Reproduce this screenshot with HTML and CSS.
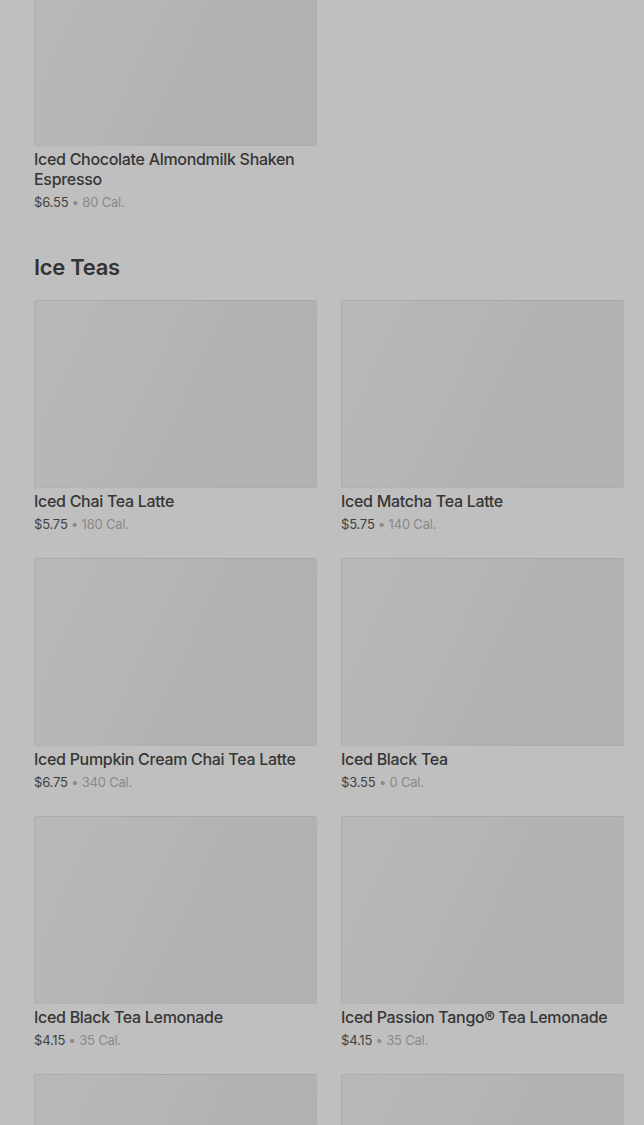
FILE: index.html
```html
<!DOCTYPE html>
<html lang="en">
<head>
    <meta charset="UTF-8">
    <title>Menu - Ice Teas</title>
    <meta name="viewport" content="width=device-width, initial-scale=1.0">
    <link rel="stylesheet" href="styles.css">
</head>
<body>
    <div class="menu">
        <section class="category first">
            <div class="grid">
                <div class="item">
                    <div class="thumb"></div>
                    <div class="name">Iced Chocolate Almondmilk Shaken Espresso</div>
                    <div class="meta"><span class="price">$6.55</span> • 80 Cal.</div>
                </div>
            </div>
        </section>

        <section class="category">
            <h2 class="heading">Ice Teas</h2>
            <div class="grid">
                <div class="item">
                    <div class="thumb"></div>
                    <div class="name">Iced Chai Tea Latte</div>
                    <div class="meta"><span class="price">$5.75</span> • 180 Cal.</div>
                </div>
                <div class="item">
                    <div class="thumb"></div>
                    <div class="name">Iced Matcha Tea Latte</div>
                    <div class="meta"><span class="price">$5.75</span> • 140 Cal.</div>
                </div>
                <div class="item">
                    <div class="thumb"></div>
                    <div class="name">Iced Pumpkin Cream Chai Tea Latte</div>
                    <div class="meta"><span class="price">$6.75</span> • 340 Cal.</div>
                </div>
                <div class="item">
                    <div class="thumb"></div>
                    <div class="name">Iced Black Tea</div>
                    <div class="meta"><span class="price">$3.55</span> • 0 Cal.</div>
                </div>
                <div class="item">
                    <div class="thumb"></div>
                    <div class="name">Iced Black Tea Lemonade</div>
                    <div class="meta"><span class="price">$4.15</span> • 35 Cal.</div>
                </div>
                <div class="item">
                    <div class="thumb"></div>
                    <div class="name">Iced Passion Tango® Tea Lemonade</div>
                    <div class="meta"><span class="price">$4.15</span> • 35 Cal.</div>
                </div>
                <div class="item">
                    <div class="thumb"></div>
                </div>
                <div class="item">
                    <div class="thumb"></div>
                </div>
            </div>
        </section>
    </div>
</body>
</html>
```

FILE: styles.css
```css
body {
    margin: 0;
    background: #bfbfbf;
    color: #333;
    font-family: Inter, 'Liberation Sans', sans-serif;
    overflow: hidden;
}
.menu {
    padding: 0 20px 0 34px;
}
.category.first {
    margin-top: -42px;
}
.heading {
    margin: 39px 0 17px 0;
    font-size: 22px;
    line-height: 32px;
    font-weight: 600;
    color: #333;
    letter-spacing: -0.3px;
}
.grid {
    display: grid;
    grid-template-columns: 283px 283px;
    column-gap: 24px;
    row-gap: 24px;
}
.thumb {
    height: 188px;
    box-sizing: border-box;
    border: 1px solid rgba(0,0,0,0.03);
    border-top-color: rgba(0,0,0,0.06);
    border-radius: 2px;
    background: linear-gradient(115deg, #b8b8b8 0%, #b6b6b6 35%, #b2b2b2 55%, #b2b2b2 100%);
}
.name {
    margin-top: 3px;
    font-size: 16px;
    line-height: 20px;
    font-weight: 500;
    color: #363636;
    letter-spacing: -0.3px;
}
.meta {
    margin-top: 3px;
    font-size: 13px;
    line-height: 20px;
    color: #8a8a8a;
    letter-spacing: -0.2px;
}
.price {
    color: #3f3f3f;
}
```
